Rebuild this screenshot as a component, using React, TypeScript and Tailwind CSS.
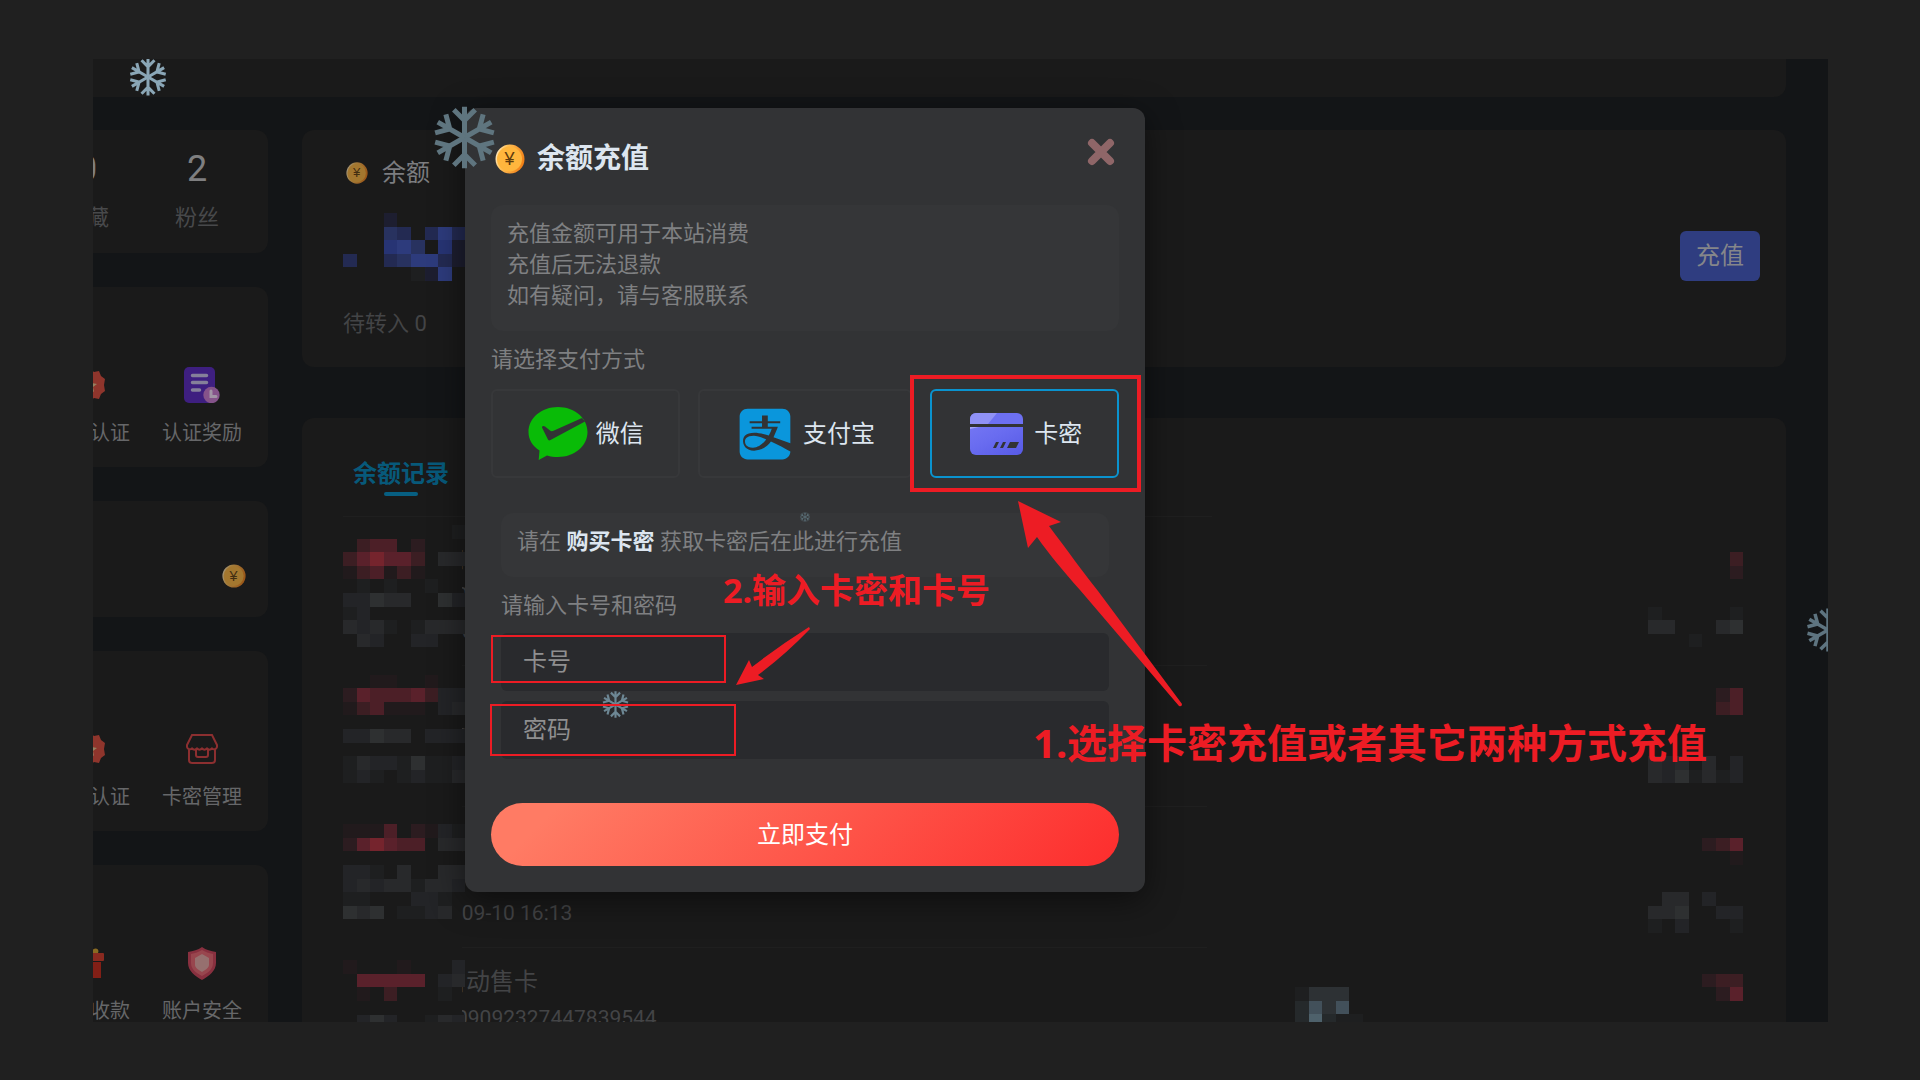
import React, { useState } from 'react';
import { FaAlipay } from 'react-icons/fa';

const palette: Record<string, string> = {
  // reds
  a: '#211a1c',
  b: '#2c1c20',
  c: '#3c1e23',
  d: '#4c1f27',
  e: '#5a212b',
  f: '#75242d',
  // greys
  '1': '#1e1f20',
  '2': '#232427',
  '3': '#28292b',
  '4': '#2e3031',
  // blues
  p: '#1d1e30',
  q: '#232a52',
  r: '#28325f',
  s: '#273474',
  t: '#2d3b7c',
  // steel
  x: '#25292b',
  y: '#2d3134',
  z: '#42505a',
  w: '#4e616b',
};

const balanceMosaic = ['...p.....', '...rq.qtq', '...str.sp', 'q..qrttqp', '.....1pt.'];

const recordMosaic = [
  '........1',
  '.cdd.b...',
  'cefeec.33',
  'acdaca...',
  '.1.1..1..',
  '22433..42',
  '12.......',
  '3231.1333',
  '.32..22..',
  '.........',
  '.........',
  '..aa..a..',
  'bedddec22',
  'acdaaa.23',
  '.........',
  '22433.222',
  '.........',
  '132214112',
  '121.12113',
  '.........',
  '.........',
  '.........',
  'aaad.ba21',
  'befedd.33',
  '.........',
  '221.3..33',
  '232331332',
  '11...221.',
  '434.1123.',
  '.........',
  '.........',
  '.........',
  'a...a...2',
  '.eeeee.23',
  '.a.c...1.',
  '.........',
  '.242..132',
];

const amountMosaic = [
  '.......',
  '.......',
  '......c',
  '......b',
  '.......',
  '.......',
  '1.....1',
  '33...34',
  '...1...',
  '.......',
  '.......',
  '.......',
  '.....bd',
  '.....cd',
  '.......',
  '.......',
  '.......',
  '323.3.2',
  '3241312',
  '.......',
  '.......',
  '.......',
  '.......',
  '....bce',
  '......a',
  '.......',
  '.......',
  '.33.2..',
  '334..22',
  '1.2...1',
  '.......',
  '.......',
  '.......',
  '....bcc',
  '.....be',
  '.......',
  '.......',
];

const noteMosaic = ['1yyy.', 'xzyz.', 'xwx11'];

const records = [
  { title: '自动售卡', no: '09092327447839544', time: '-09-10 16:13' },
  { title: '自动售卡', no: '09092327447839544', time: '-09-10 16:13' },
  { title: '自动售卡', no: '09092327447839544', time: '-09-10 16:13' },
  { title: '自动售卡', no: '09092327447839544', time: '-09-10 16:13' },
];

function Mosaic({ rows, className = '' }: { rows: string[]; className?: string }) {
  const cols = rows[0].length;
  return (
    <svg
      viewBox={`0 0 ${cols * 13.6} ${rows.length * 13.6}`}
      width={cols * 13.6}
      height={rows.length * 13.6}
      shapeRendering="crispEdges"
      className={className}
      aria-hidden="true"
    >
      {rows.flatMap((row, y) =>
        row.split('').map((cell, x) =>
          cell === '.' ? null : (
            <rect key={`${x}-${y}`} x={x * 13.6} y={y * 13.6} width="13.6" height="13.6" fill={palette[cell]} />
          )
        )
      )}
    </svg>
  );
}

function Snowflake({ className }: { className: string }) {
  return (
    <svg viewBox="-50 -50 100 100" className={`absolute pointer-events-none ${className}`} aria-hidden="true">
      <g fill="none" stroke="currentColor" strokeWidth="8">
        {[0, 60, 120, 180, 240, 300].map((deg) => (
          <path key={deg} d="M0 0V-49M-17 -44L0 -27L17 -44" transform={`rotate(${deg})`} />
        ))}
      </g>
    </svg>
  );
}

function Coin({ className }: { className: string }) {
  return (
    <svg viewBox="0 0 30 30" className={`shrink-0 ${className}`} aria-hidden="true">
      <defs>
        <linearGradient id="coinRim" x1="0" y1="0.3" x2="1" y2="0.6">
          <stop offset="0" stopColor="#ffe9c0" />
          <stop offset="0.3" stopColor="#ffc158" />
          <stop offset="1" stopColor="#f07d14" />
        </linearGradient>
      </defs>
      <circle cx="15" cy="15" r="14.5" fill="url(#coinRim)" />
      <circle cx="14.5" cy="15" r="12.5" fill="#ffb63d" />
      <text x="14.5" y="21" textAnchor="middle" fontSize="18" fill="#5d3a0c" fontFamily="Liberation Sans, sans-serif">
        ¥
      </text>
    </svg>
  );
}

function BadgeIcon() {
  return (
    <svg viewBox="0 0 36 36" className="w-9 h-9" aria-hidden="true">
      <path
        d="M18 2l4 3 5-1 2 5 4 3-1 6 1 6-4 3-2 5-5-1-4 3-4-3-5 1-2-5-4-3 1-6-1-6 4-3 2-5 5 1z"
        fill="#8f352c"
      />
      <path d="M18 11l2 5 5 1-4 3 1 5-4-3-4 3 1-5-4-3 5-1z" fill="#97805f" />
    </svg>
  );
}

function RewardIcon() {
  return (
    <svg viewBox="0 0 36 36" className="w-9 h-9" aria-hidden="true">
      <rect x="0" y="0" width="31" height="36" rx="5" fill="#3e1f80" />
      <path d="M8.500 8.500h14M8.500 15.500h14M8.500 23h7" stroke="#85809a" strokeWidth="3.500" strokeLinecap="round" />
      <circle cx="27.500" cy="28" r="8.200" fill="#85538a" />
      <path d="M27 24v5.500h5" fill="none" stroke="#a294a6" strokeWidth="3" strokeLinecap="round" />
    </svg>
  );
}

function StoreIcon() {
  return (
    <svg viewBox="0 0 36 36" className="w-9 h-9" fill="none" stroke="#8c2f30" strokeWidth="2" aria-hidden="true">
      <path d="M8 4h20l5 10v2a3 3 0 0 1-5 1.500a3.300 3.300 0 0 1-5 0a3.300 3.300 0 0 1-5 0a3.300 3.300 0 0 1-5 0a3.300 3.300 0 0 1-5 0A3 3 0 0 1 3 16v-2z" />
      <path d="M5 18v11a3 3 0 0 0 3 3h20a3 3 0 0 0 3-3V18" />
      <path d="M12 18v6a2 2 0 0 0 2 2h8a2 2 0 0 0 2-2v-6" />
    </svg>
  );
}

function GiftIcon() {
  return (
    <svg viewBox="0 0 36 36" className="w-9 h-9" aria-hidden="true">
      <path d="M18 7c-5-6-10-3-8 1h16c2-4-3-7-8-1z" fill="#8a6a22" />
      <rect x="4" y="8" width="28" height="8" rx="1" fill="#8a2a20" />
      <rect x="7" y="17" width="22" height="16" fill="#821f16" />
    </svg>
  );
}

function ShieldIcon() {
  return (
    <svg viewBox="0 0 36 36" className="w-9 h-9" aria-hidden="true">
      <path d="M18 2c4 3 9 4 14 5v11c0 8-7 13-14 17C11 31 4 26 4 18V7c5-1 10-2 14-5z" fill="#88303f" />
      <path d="M18 5c3 2 7 3 11 4v9c0 6-5 10-11 13C12 28 7 24 7 18V9c4-1 8-2 11-4z" fill="#98464e" />
      <path d="M18 9l7 4v7c0 3-4 5-7 7c-3-2-7-4-7-7v-7z" fill="#96706f" />
    </svg>
  );
}

function WechatPayIcon() {
  return (
    <svg viewBox="0 0 60 53" className="w-[60px]" aria-hidden="true">
      <path
        d="M30 0C46.500 0 59.500 11 59.500 25S46.500 50 30 50c-4 0-7.500-.5-11-1.500L10.700 53l.8-9.500C4.500 39 .5 32.500 .5 25C.5 11 13.500 0 30 0z"
        fill="#09bb07"
      />
      <path
        d="M14 20.500c.3-2 2-1.600 3-1l5 4c1 .8 2 .8 3.500 .3L54 11l3 3.500L22.500 33c-1.500 .8-2.200 .4-2.800-1z"
        fill="#323335"
      />
    </svg>
  );
}

function CardIcon() {
  return (
    <svg viewBox="0 0 53 42" className="w-[53px]" aria-hidden="true">
      <defs>
        <linearGradient id="cardBody" x1="0" y1="0" x2="1" y2="1">
          <stop offset="0" stopColor="#7375f3" />
          <stop offset="0.4" stopColor="#696cf0" />
          <stop offset="1" stopColor="#575ae6" />
        </linearGradient>
      </defs>
      <path d="M6 0h41a6 6 0 0 1 6 6v5H0V6a6 6 0 0 1 6-6z" fill="#6d70f2" />
      <path d="M6 0h21l-9 11H0V6a6 6 0 0 1 6-6z" fill="#9092f6" />
      <path d="M0 14h53v22a6 6 0 0 1-6 6H6a6 6 0 0 1-6-6z" fill="url(#cardBody)" />
      <path d="M0 14h9l-9 2z" fill="#a5a6f8" />
      <path d="M26 29h3l-3 6h-3zM33 29h3l-3 6h-3zM40 29h9l-3 6h-9z" fill="#323335" />
    </svg>
  );
}

const menus = [
  [
    { label: '身份认证', icon: <BadgeIcon /> },
    { label: '认证奖励', icon: <RewardIcon /> },
  ],
  [
    { label: '商家认证', icon: <BadgeIcon /> },
    { label: '卡密管理', icon: <StoreIcon /> },
  ],
  [
    { label: '打赏收款', icon: <GiftIcon /> },
    { label: '账户安全', icon: <ShieldIcon /> },
  ],
];

const payMethods = [
  { id: 'wechat', label: '微信', icon: <WechatPayIcon /> },
  { id: 'alipay', label: '支付宝', icon: <FaAlipay size={58} className="text-[#0a96dc]" /> },
  { id: 'card', label: '卡密', icon: <CardIcon /> },
];

function MenuCard({ items }: { items: (typeof menus)[number] }) {
  return (
    <nav className="flex justify-end bg-[#1a1a1a] rounded-r-xl pt-20 pb-5 pr-2.5 overflow-hidden">
      {items.map((item) => (
        <a key={item.label} href="#" className="w-28 shrink-0 flex flex-col items-center gap-4">
          {item.icon}
          <span className="text-[20px] leading-7 text-[#666769]">{item.label}</span>
        </a>
      ))}
    </nav>
  );
}

function Sidebar() {
  return (
    <aside className="w-[175px] shrink-0 flex flex-col gap-[34px]">
      <div className="flex justify-end bg-[#1a1a1a] rounded-r-xl pt-[19px] pb-[21px] pr-4 overflow-hidden">
        {[
          ['0', '收藏'],
          ['2', '粉丝'],
        ].map(([count, label]) => (
          <div key={label} className="w-[110px] shrink-0 text-center">
            <div className="text-[36px] leading-10 text-[#7f7f80]">{count}</div>
            <div className="mt-[15px] text-[22px] leading-7 text-[#48494b]">{label}</div>
          </div>
        ))}
      </div>
      <MenuCard items={menus[0]} />
      <div className="flex justify-end bg-[#1a1a1a] rounded-r-xl pt-[63px] pb-[29px] pr-[22px]">
        <Coin className="w-6 h-6 opacity-60" />
      </div>
      <MenuCard items={menus[1]} />
      <MenuCard items={menus[2]} />
    </aside>
  );
}

function BalanceCard() {
  return (
    <section className="bg-[#1a1a1a] rounded-xl pt-[29px] pb-[29px] pl-[41px] pr-[26px]">
      <div className="flex items-center gap-3.5 pl-[3px]">
        <Coin className="w-[22px] h-[22px] opacity-60" />
        <h2 className="text-[24px] leading-7 text-[#7c7d80]">余额</h2>
      </div>
      <div className="mt-11 flex items-end justify-between">
        <Mosaic rows={balanceMosaic} className="-mt-[18px]" />
        <button className="h-[50px] w-20 rounded-md bg-[#2f3d80] text-[24px] text-[#85868a]">充值</button>
      </div>
      <p className="mt-[29px] text-[22px] leading-7 text-[#434446]">待转入 0</p>
    </section>
  );
}

function RecordsCard() {
  return (
    <section className="bg-[#1a1a1a] rounded-xl pt-10 px-[41px]">
      <div className="pb-5 w-[62%] border-b border-[#1f1f1f]">
        <button className="ml-2.5 flex flex-col items-center gap-0.5 text-[24px] leading-8 font-bold text-[#07597a]">
          余额记录
          <span className="block w-[34px] h-1 rounded-full bg-[#075f82]" />
        </button>
      </div>
      <div className="relative mt-2">
        <ul className="ml-[119px] overflow-hidden">
          {records.map((record, i) => (
            <li key={i} className="w-[745px] py-4 leading-9 text-[#434446] border-b border-[#1f1f1f]">
              <div className="-ml-5 text-[24px]">{record.title}</div>
              <div className="-ml-1.5 text-[21px]">{record.no}</div>
              <div className="-ml-1.5 text-[21px]">{record.time}</div>
            </li>
          ))}
        </ul>
        <Mosaic rows={recordMosaic} className="absolute left-0 top-0" />
        <Mosaic rows={amountMosaic} className="absolute right-0.5 top-0" />
        <Mosaic rows={noteMosaic} className="absolute left-[952px] top-[462px]" />
      </div>
    </section>
  );
}

function RechargeDialog() {
  const [method, setMethod] = useState('card');

  return (
    <div
      role="dialog"
      aria-labelledby="recharge-title"
      className="absolute left-[372px] top-[49px] w-[680px] rounded-xl bg-[#323335] px-[26px] pt-[33px] pb-[26px] shadow-[0_8px_32px_rgba(0,0,0,0.5)]"
    >
      <div className="flex items-center h-9 pl-1">
        <Coin className="w-[30px] h-[30px]" />
        <h1 id="recharge-title" className="ml-3 text-[28px] leading-9 font-bold text-[#dde6f0]">
          余额充值
        </h1>
        <button aria-label="关闭" className="ml-auto mr-1 mb-3.5">
          <svg viewBox="0 0 28 28" className="w-7 h-7 text-[#8f6668]" aria-hidden="true">
            <path d="M5 5L23 23M23 5L5 23" stroke="currentColor" strokeWidth="8" strokeLinecap="round" />
          </svg>
        </button>
      </div>

      <div className="mt-7 rounded-xl bg-[#353638] pt-[13px] pb-5 px-4 text-[22px] leading-[31px] text-[#7f8082]">
        <p>充值金额可用于本站消费</p>
        <p>充值后无法退款</p>
        <p>如有疑问，请与客服联系</p>
      </div>

      <fieldset>
        <legend className="pt-[15px] text-[22px] leading-7 text-[#7f8082]">请选择支付方式</legend>
        <div className="mt-[15px] flex gap-[18px]">
          {payMethods.map((item) => (
            <label
              key={item.id}
              className={`flex-auto h-[89px] flex items-center justify-center gap-2 rounded-md cursor-pointer ${
                method === item.id ? 'border-2 border-[#0a93cf]' : 'border-2 border-[#37383a]'
              }`}
            >
              <input
                type="radio"
                name="method"
                className="sr-only"
                checked={method === item.id}
                onChange={() => setMethod(item.id)}
              />
              <span className="w-[60px] flex justify-center">{item.icon}</span>
              <span className="text-[24px] text-[#dde6f0]">{item.label}</span>
            </label>
          ))}
        </div>
      </fieldset>

      <div className="px-2.5">
        <p className="mt-[35px] rounded-xl bg-[#353638] pt-[13px] pb-5 px-4 text-[22px] leading-[31px] text-[#7f8082]">
          请在{' '}
          <a href="#" className="font-bold text-[#dde6f0]">
            购买卡密
          </a>{' '}
          获取卡密后在此进行充值
        </p>
        <label htmlFor="card-no" className="block mt-[15px] text-[22px] leading-7 text-[#7f8082]">
          请输入卡号和密码
        </label>
        <input
          id="card-no"
          placeholder="卡号"
          className="block mt-[13px] w-full h-[58px] rounded-md bg-[#292a2d] px-[22px] text-[24px] placeholder:text-[#8f8f90]"
        />
        <input
          aria-label="密码"
          placeholder="密码"
          className="block mt-2.5 w-full h-[58px] rounded-md bg-[#292a2d] px-[22px] text-[24px] placeholder:text-[#8f8f90]"
        />
      </div>

      <button className="mt-11 w-full h-[63px] rounded-full bg-[linear-gradient(135deg,#ff7b64_10%,#fd2d2d)] text-[24px] text-white">
        立即支付
      </button>
    </div>
  );
}

function Annotations() {
  return (
    <div className="absolute left-0 top-0 pointer-events-none text-[#ed1c24]">
      <div className="absolute left-[817px] top-[316px] w-[231px] h-[117px] border-4 border-[#ed1c24]" />
      <div className="absolute left-[398px] top-[576px] w-[235px] h-12 border-2 border-[#ed1c24]" />
      <div className="absolute left-[397px] top-[645px] w-[246px] h-[52px] border-2 border-[#ed1c24]" />

      <svg viewBox="0 0 166 208" className="absolute left-[924px] top-[441px] w-[166px] h-[208px] max-w-none" aria-hidden="true">
        <path d="M1 1L44 22L32 26C50 50 66 72 81 91L165 204Q165 207 162 206L63 90C46 71 32 54 20 37L11 48Z" fill="currentColor" />
      </svg>
      <svg viewBox="0 0 76 60" className="absolute left-[642px] top-[567px] w-[76px] h-[60px] max-w-none" aria-hidden="true">
        <path d="M1 59L14 34L17 41Q44 20 74 1L75 3Q50 29 23 49L29 53Z" fill="currentColor" />
      </svg>

      <div className="absolute left-[630px] top-[507px] whitespace-nowrap font-['Noto_Sans','Noto_Sans_CJK_SC',sans-serif] text-[34px] leading-[48px] font-bold">
        2.输入卡密和卡号
      </div>
      <div className="absolute left-[940px] top-[660px] whitespace-nowrap font-['Noto_Sans','Noto_Sans_CJK_SC',sans-serif] text-[40px] leading-[48px] font-bold">
        1.选择卡密充值或者其它两种方式充值
      </div>
    </div>
  );
}

export default function App() {
  return (
    <div className="h-screen flex bg-[#202020] pt-[59px] pr-[92px] pb-[58px] pl-[93px] font-['Roboto','Noto_Sans_CJK_SC',sans-serif]">
      <div className="relative flex-1 overflow-hidden bg-[#131517]">
        <header className="h-[38px] mr-[42px] rounded-br-xl bg-[#1a1a1a]" />
        <main className="mt-[33px] mr-[42px] flex items-start gap-[34px]">
          <Sidebar />
          <div className="flex-1 flex flex-col gap-[51px]">
            <BalanceCard />
            <RecordsCard />
          </div>
        </main>

        <RechargeDialog />

        <Snowflake className="left-[36px] -top-px w-[38px] h-[38px] text-[#8aa6b6]" />
        <Snowflake className="left-[340px] top-[47px] w-[63px] h-[63px] text-[#5f757f]" />
        <Snowflake className="left-[509px] top-[632px] w-[27px] h-[27px] text-[#6d8794]" />
        <Snowflake className="left-[707px] top-[453px] w-[10px] h-[10px] text-[#5b7078]" />
        <Snowflake className="left-[1713px] top-[549px] w-[44px] h-[44px] text-[#5e7480]" />

        <Annotations />
      </div>
    </div>
  );
}
